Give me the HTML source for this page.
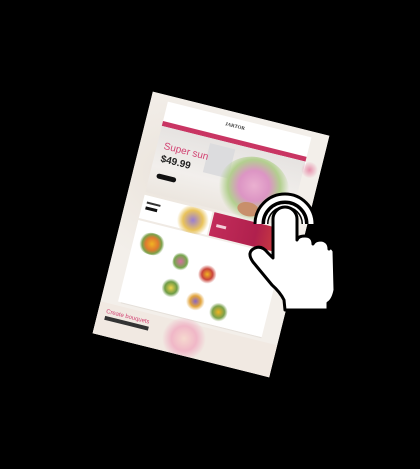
<!DOCTYPE html>
<html><head><meta charset="utf-8"><style>
html,body{margin:0;padding:0;background:#000;width:420px;height:469px;overflow:hidden;font-family:"Liberation Sans",sans-serif}
#pg{position:absolute;left:120px;top:109.5px;width:182px;height:249px;transform:rotate(14deg);transform-origin:91px 124.5px;background:#f3efea;overflow:hidden}
.a{position:absolute}
</style></head><body>
<div id="pg">
  <div class="a" style="left:0;top:0;width:182px;height:249px;background:radial-gradient(circle at 20% 30%,#ebe4dc 0,#f3efea 40%)"></div>
  <div class="a" style="left:17px;top:6px;width:148px;height:22px;background:#fff"></div>
  <div class="a" style="left:78px;top:12px;font:bold 5px 'Liberation Serif',serif;color:#333">JARTOR</div>
  <div class="a" style="left:17px;top:26px;width:148px;height:5px;background:#c93563"></div>
  <div class="a" style="left:140px;top:31px;width:26px;height:9px;background:#fff"></div>
  <div class="a" style="left:17px;top:31px;width:148px;height:68px;background:linear-gradient(180deg,#e6e3e1,#f2efec 60%,#ece6df)"></div>
  <div class="a" style="left:68px;top:36px;width:26px;height:30px;background:#dcdcde"></div>
  <div class="a" style="left:85px;top:38px;width:72px;height:64px;border-radius:50%;background:radial-gradient(circle at 50% 45%,#eab0d0 0,#dc95c4 30%,#b3cf8f 52%,rgba(240,235,230,0) 70%)"></div>
  <div class="a" style="left:110px;top:84px;width:22px;height:14px;border-radius:50%;background:#c88f6b"></div>
  <div class="a" style="left:24px;top:45px;font:10px 'Liberation Sans',sans-serif;color:#d24272;white-space:nowrap">Super sun</div>
  <div class="a" style="left:24px;top:58px;font:bold 10px 'Liberation Sans',sans-serif;color:#222">$49.99</div>
  <div class="a" style="left:24px;top:78px;width:20px;height:5px;border-radius:3px;background:#111"></div>
  <div class="a" style="left:17px;top:102px;width:70px;height:24px;background:#fff"></div>
  <div class="a" style="left:52px;top:102px;width:36px;height:26px;border-radius:40%;background:radial-gradient(circle,#9b7fd3 0,#e9c35b 45%,rgba(255,255,255,0) 72%)"></div>
  <div class="a" style="left:21px;top:108px;width:14px;height:2px;background:#333"></div>
  <div class="a" style="left:21px;top:113px;width:12px;height:3px;background:#111"></div>
  <div class="a" style="left:89px;top:102px;width:76px;height:24px;background:linear-gradient(90deg,#c22c5a,#b0204d 60%,#d2453a)"></div>
  <div class="a" style="left:94px;top:113px;width:10px;height:3px;background:#f3cfd9"></div>
  <div class="a" style="left:17px;top:128px;width:148px;height:84px;background:#fff"></div>
  <div class="a" style="left:22px;top:137px;width:28px;height:22px;border-radius:50%;background:radial-gradient(circle,#f0b323 0,#e07a2e 35%,#7aa04a 55%,rgba(255,255,255,0) 70%)"></div>
  <div class="a" style="left:60px;top:148px;width:16px;height:20px;border-radius:50%;background:radial-gradient(circle,#d66fa1 0,#76a54d 50%,rgba(255,255,255,0) 70%)"></div>
  <div class="a" style="left:88px;top:154px;width:18px;height:20px;border-radius:50%;background:radial-gradient(circle,#f0b323 0,#c9443a 40%,rgba(255,255,255,0) 70%)"></div>
  <div class="a" style="left:56px;top:176px;width:18px;height:20px;border-radius:50%;background:radial-gradient(circle,#f3d34a 0,#6d9b45 45%,rgba(255,255,255,0) 70%)"></div>
  <div class="a" style="left:82px;top:184px;width:20px;height:18px;border-radius:50%;background:radial-gradient(circle,#8a66c4 0,#e2a43c 40%,rgba(255,255,255,0) 70%)"></div>
  <div class="a" style="left:108px;top:188px;width:18px;height:20px;border-radius:50%;background:radial-gradient(circle,#f0b323 0,#7aa04a 45%,rgba(255,255,255,0) 70%)"></div>
  <div class="a" style="left:20px;top:212px;width:145px;height:1px;background:#e5e0da"></div>
  <div class="a" style="left:0;top:216px;width:182px;height:33px;background:#f1e9e2"></div>
  <div class="a" style="left:8px;top:222px;font:6px 'Liberation Sans',sans-serif;color:#d24272;white-space:nowrap">Create bouquets</div>
  <div class="a" style="left:8px;top:229px;width:45px;height:4px;background:#333"></div>
  <div class="a" style="left:66px;top:212px;width:48px;height:40px;border-radius:50%;background:radial-gradient(circle,#f6d9cf 0,#f0b7c7 40%,rgba(241,233,226,0) 70%)"></div>
  <div class="a" style="left:162px;top:30px;width:18px;height:16px;border-radius:50%;background:radial-gradient(circle,#e891ad 0,rgba(243,239,234,0) 70%)"></div>
</div>
<svg class="a" style="position:absolute;left:0;top:0" width="420" height="469" viewBox="0 0 420 469">
  <path d="M259,224 A26,26 0 0 1 311,224" fill="none" stroke="#000" stroke-width="11"/>
  <path d="M259,224 A26,26 0 0 1 311,224" fill="none" stroke="#fff" stroke-width="5"/>
  <path d="M266,224 A19,19 0 0 1 304,224" fill="none" stroke="#000" stroke-width="5"/>
  <path d="M266,224 A19,19 0 0 1 304,224" fill="none" stroke="#fff" stroke-width="2"/>
  <path d="M273,252 L273,219 A12,12 0 0 1 297,219 L297,240 Q298,236 305,236 Q313,236 313,244 Q315,240 321,240 Q329,241 329,249 Q331,246 334,251 L335,290 Q333,300 328,303 L328,310 L285,310 L284,300 Q280,292 272,285 L253,262 Q246,252 255,248 Q262,245 268,253 L273,258 Z" fill="#fff" stroke="#000" stroke-width="3" stroke-linejoin="round"/>
</svg>
</body></html>
